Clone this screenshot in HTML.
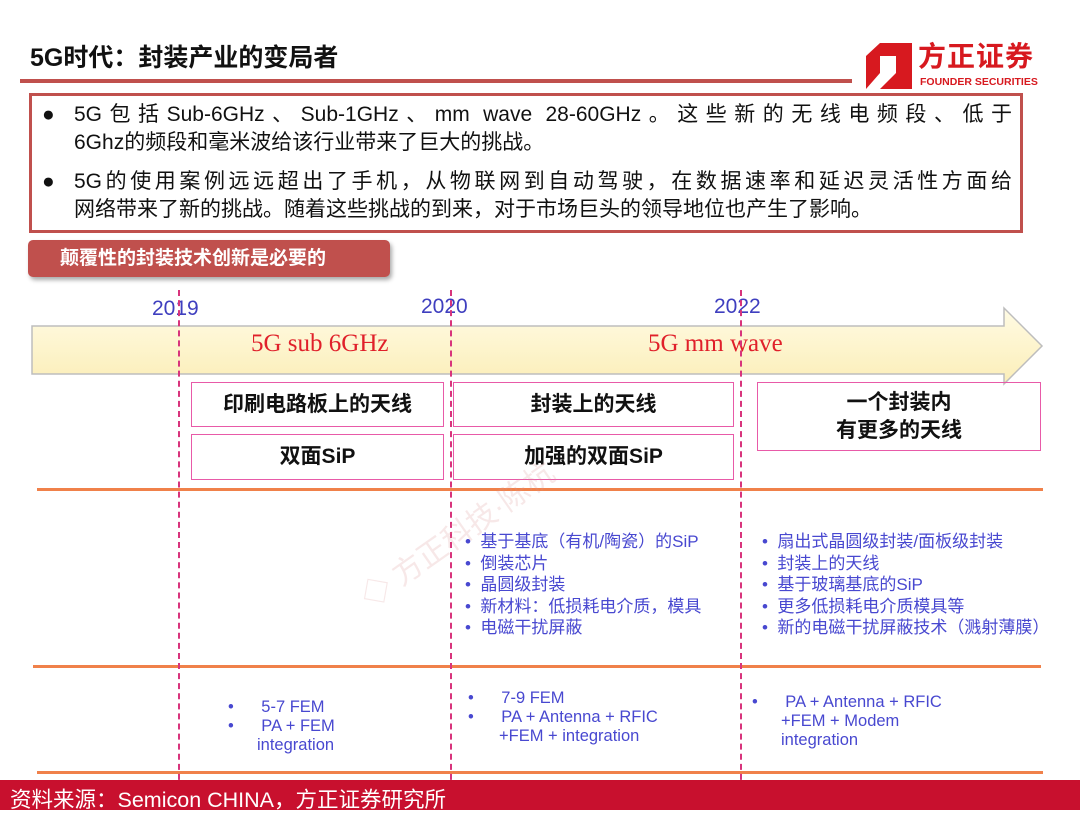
<!DOCTYPE html>
<html><head><meta charset="utf-8"><style>
*{margin:0;padding:0;box-sizing:border-box}
body{width:1080px;height:810px;position:relative;background:#fff;font-family:"Liberation Sans","Noto Sans CJK SC",sans-serif;overflow:hidden}
.a{position:absolute;white-space:nowrap}
.box{position:absolute;border:1.5px solid #e85aa8;display:flex;align-items:center;justify-content:center;font-weight:bold;font-size:21px;color:#111;text-align:center;line-height:28px}
.vl{position:absolute;top:290px;height:500px;width:0;border-left:2px dashed #d8347c}
.hl{position:absolute;height:3px;background:#f0814a}
.bl{position:absolute;color:#4848d0;font-size:17px;line-height:21.5px;white-space:nowrap}
.yr{position:absolute;color:#3f3fbf;font-size:21px}
</style></head><body>
<div class="a" style="left:30px;top:38px;font-size:25px;font-weight:bold;color:#111">5G时代：封装产业的变局者</div>
<div class="a" style="left:20px;top:79px;width:832px;height:4px;background:#c0504d"></div>
<svg class="a" style="left:866px;top:43px" width="46" height="46" viewBox="0 0 46 46"><path d="M14 0H46V13H30V30H14L0 46V13Z" fill="#d7191f"/><path d="M46 13V46H14L30 30V13Z" fill="#d7191f"/><rect x="14" y="13" width="16" height="17" fill="#fff"/></svg>
<div class="a" style="left:918px;top:40px;font-size:28px;line-height:34px;font-weight:bold;color:#d7191f;letter-spacing:1px">方正证券</div>
<div class="a" style="left:920px;top:76px;font-size:10.5px;line-height:12px;font-weight:bold;color:#d7191f">FOUNDER SECURITIES</div>
<div class="a" style="left:29px;top:93px;width:994px;height:140px;border:3px solid #c0504d"></div>
<div class="a" style="left:42px;top:101px;font-size:21px;line-height:28px;color:#111;white-space:normal;width:970px">
<div style="position:relative;padding-left:32px;text-align:justify;text-align-last:justify;"><span style="position:absolute;left:0">●</span>5G包括Sub-6GHz、Sub-1GHz、mm wave 28-60GHz。这些新的无线电频段、低于</div>
<div style="padding-left:32px">6Ghz的频段和毫米波给该行业带来了巨大的挑战。</div>
<div style="position:relative;padding-left:32px;margin-top:11px;text-align:justify;text-align-last:justify"><span style="position:absolute;left:0">●</span>5G的使用案例远远超出了手机，从物联网到自动驾驶，在数据速率和延迟灵活性方面给</div>
<div style="padding-left:32px">网络带来了新的挑战。随着这些挑战的到来，对于市场巨头的领导地位也产生了影响。</div>
</div>
<div class="a" style="left:28px;top:240px;width:362px;height:37px;background:#c0504d;border-radius:5px;box-shadow:2px 3px 4px #aaa;color:#fff;font-weight:bold;font-size:19px;line-height:37px;padding-left:32px">颠覆性的封装技术创新是必要的</div>
<svg class="a" style="left:30px;top:306px" width="1015" height="80"><defs><linearGradient id="g" x1="0" y1="0" x2="0" y2="1"><stop offset="0" stop-color="#fffbe4"/><stop offset="1" stop-color="#fbeeb8"/></linearGradient></defs><path d="M2 20H974V2L1012 40L974 78V68H2Z" fill="url(#g)" stroke="#bdbdbd" stroke-width="1.5"/></svg>
<div class="yr" style="left:152px;top:297px">2019</div>
<div class="yr" style="left:421px;top:295px">2020</div>
<div class="yr" style="left:714px;top:295px">2022</div>
<div class="a" style="left:251px;top:330px;font-family:'Liberation Serif',serif;font-size:25px;color:#e0202a">5G sub 6GHz</div>
<div class="a" style="left:648px;top:330px;font-family:'Liberation Serif',serif;font-size:25px;color:#e0202a">5G mm wave</div>
<div class="box" style="left:191px;top:382px;width:253px;height:45px">印刷电路板上的天线</div>
<div class="box" style="left:191px;top:434px;width:253px;height:46px">双面SiP</div>
<div class="box" style="left:453px;top:382px;width:281px;height:45px">封装上的天线</div>
<div class="box" style="left:453px;top:434px;width:281px;height:46px">加强的双面SiP</div>
<div class="box" style="left:757px;top:382px;width:284px;height:69px">一个封装内<br>有更多的天线</div>
<div class="hl" style="left:37px;top:488px;width:1006px"></div>
<div class="hl" style="left:33px;top:665px;width:1008px"></div>
<div class="hl" style="left:37px;top:771px;width:1006px"></div>
<div class="vl" style="left:178px"></div>
<div class="vl" style="left:450px"></div>
<div class="vl" style="left:740px"></div>
<div class="a" style="left:350px;top:580px;font-size:30px;color:rgba(220,150,150,0.22);transform:rotate(-35deg);transform-origin:left top">◇ 方正科技·陈杭</div>
<div class="bl" style="left:465px;top:531px">•&nbsp;&nbsp;基于基底（有机/陶瓷）的SiP<br>•&nbsp;&nbsp;倒装芯片<br>•&nbsp;&nbsp;晶圆级封装<br>•&nbsp;&nbsp;新材料：低损耗电介质，模具<br>•&nbsp;&nbsp;电磁干扰屏蔽</div>
<div class="bl" style="left:762px;top:531px">•&nbsp;&nbsp;扇出式晶圆级封装/面板级封装<br>•&nbsp;&nbsp;封装上的天线<br>•&nbsp;&nbsp;基于玻璃基底的SiP<br>•&nbsp;&nbsp;更多低损耗电介质模具等<br>•&nbsp;&nbsp;新的电磁干扰屏蔽技术（溅射薄膜）</div>
<div class="bl" style="left:228px;top:698px;line-height:19px;font-size:16.5px">•&nbsp;&nbsp;&nbsp;&nbsp;&nbsp;&nbsp;5-7 FEM<br>•&nbsp;&nbsp;&nbsp;&nbsp;&nbsp;&nbsp;PA + FEM<br><span style="padding-left:29px">integration</span></div>
<div class="bl" style="left:468px;top:689px;line-height:19px;font-size:16.5px">•&nbsp;&nbsp;&nbsp;&nbsp;&nbsp;&nbsp;7-9 FEM<br>•&nbsp;&nbsp;&nbsp;&nbsp;&nbsp;&nbsp;PA + Antenna + RFIC<br><span style="padding-left:31px">+FEM + integration</span></div>
<div class="bl" style="left:752px;top:693px;line-height:19px;font-size:16.5px">•&nbsp;&nbsp;&nbsp;&nbsp;&nbsp;&nbsp;PA + Antenna + RFIC<br><span style="padding-left:29px">+FEM + Modem</span><br><span style="padding-left:29px">integration</span></div>
<div class="a" style="left:0;top:780px;width:1080px;height:30px;background:#c8102e"></div>
<div class="a" style="left:10px;top:783px;font-size:21.5px;color:#fff">资料来源：Semicon CHINA，方正证券研究所</div>
</body></html>
